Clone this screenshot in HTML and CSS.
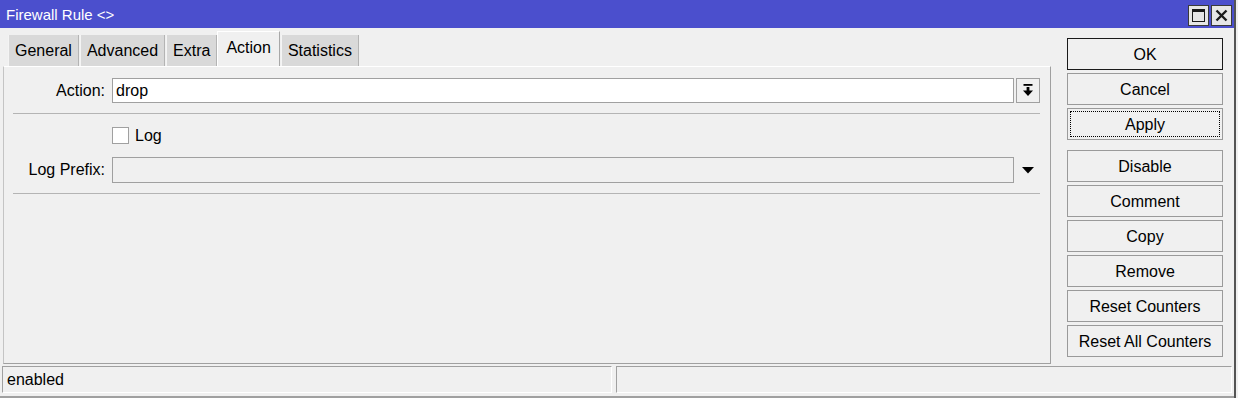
FILE: index.html
```html
<!DOCTYPE html>
<html>
<head>
<meta charset="utf-8">
<link rel="stylesheet" href="styles.css">
</head>
<body>
<div class="window">
  <div class="titlebar">
    <span class="title">Firewall Rule &lt;&gt;</span>
    <div class="wbtns">
      <div class="wbtn">
        <svg width="19" height="19" viewBox="0 0 19 19"><rect x="3.5" y="3.5" width="12" height="12" fill="none" stroke="#1a1a1a" stroke-width="1"/><rect x="3" y="3" width="13" height="3" fill="#1a1a1a"/></svg>
      </div>
      <div class="wbtn">
        <svg width="19" height="19" viewBox="0 0 19 19"><path d="M4.5 4.5 L14.5 14.5 M14.5 4.5 L4.5 14.5" stroke="#1a1a1a" stroke-width="2.4" fill="none"/></svg>
      </div>
    </div>
  </div>
  <div class="main">
    <div class="leftcol">
      <div class="tabs">
        <div class="tab">General</div>
        <div class="tab">Advanced</div>
        <div class="tab">Extra</div>
        <div class="tab active">Action</div>
        <div class="tab">Statistics</div>
      </div>
      <div class="panel">
        <div class="row row-action">
          <label class="lbl">Action:</label>
          <div class="input">drop</div>
          <div class="ddbtn">
            <svg width="22" height="23" viewBox="0 0 22 23"><rect x="6.5" y="5" width="9" height="1.8" fill="#000"/><rect x="9.6" y="8" width="2.8" height="4" fill="#000"/><polygon points="6,11.5 16,11.5 11,17" fill="#000"/></svg>
          </div>
        </div>
        <div class="sep"></div>
        <div class="row row-check">
          <div class="check"></div>
          <span class="checklbl">Log</span>
        </div>
        <div class="row row-prefix">
          <label class="lbl">Log Prefix:</label>
          <div class="input disabled"></div>
          <div class="ddarrow">
            <svg width="12" height="7" viewBox="0 0 12 7"><polygon points="0,0 12,0 6,6.5" fill="#000"/></svg>
          </div>
        </div>
        <div class="sep sep2"></div>
      </div>
    </div>
    <div class="buttons">
      <div class="btn default">OK</div>
      <div class="btn">Cancel</div>
      <div class="btn focus"><span>Apply</span></div>
      <div class="btn group">Disable</div>
      <div class="btn">Comment</div>
      <div class="btn">Copy</div>
      <div class="btn">Remove</div>
      <div class="btn">Reset Counters</div>
      <div class="btn">Reset All Counters</div>
    </div>
  </div>
  <div class="statusbar">
    <div class="sfield first">enabled</div>
    <div class="sfield second"></div>
  </div>
</div>
</body>
</html>
```
FILE: styles.css
```css
html, body {
  margin: 0;
  padding: 0;
  background: #f0f0f0;
}
body {
  font-family: "Liberation Sans", Arial, sans-serif;
  font-size: 16px;
  color: #000;
}
.window {
  width: 1236px;
  height: 398px;
  box-sizing: border-box;
  border-right: 2px solid #555;
  display: flex;
  flex-direction: column;
  background: #f0f0f0;
}
.titlebar {
  height: 28px;
  background: #4b4fcd;
  display: flex;
  align-items: center;
  justify-content: space-between;
  padding: 0 2px 0 6px;
  flex: none;
}
.title {
  color: #fff;
  font-size: 15px;
  margin-top: 1px;
}
.wbtns {
  display: flex;
  gap: 2px;
  margin-top: 2px;
}
.wbtn {
  width: 21px;
  height: 21px;
  box-sizing: border-box;
  border: 1px solid #3a3a3a;
  background: #e6e6e6;
  display: flex;
  align-items: center;
  justify-content: center;
}
.main {
  display: flex;
  height: 336px;
  padding: 3px 0 0 3px;
  box-sizing: border-box;
  flex: none;
}
.leftcol {
  width: 1048px;
  display: flex;
  flex-direction: column;
}
.tabs {
  height: 35px;
  display: flex;
  align-items: flex-end;
  padding-left: 5px;
}
.tab {
  height: 31px;
  box-sizing: border-box;
  background: #d9d9d9;
  border-left: 1px solid #f4f4f4;
  border-right: 1px solid #b4b4b4;
  padding: 1px 6px 0 6px;
  margin-right: 1px;
  display: flex;
  align-items: center;
}
.tab.active {
  height: 35px;
  background: #f0f0f0;
  border-top: 1px solid #fff;
  border-left: 1px solid #fff;
  border-right: 1px solid #a8a8a8;
  margin: 0 1px 0 -1px;
  padding: 0 8px 3px 8px;
  position: relative;
  z-index: 1;
}
.panel {
  height: 298px;
  box-sizing: border-box;
  border-top: 1px solid #fff;
  border-left: 1px solid #c4c4c4;
  border-right: 1px solid #a0a0a0;
  border-bottom: 1px solid #a0a0a0;
  padding-top: 11px;
}
.row {
  display: flex;
  align-items: center;
}
.lbl {
  width: 101px;
  text-align: right;
  margin-right: 7px;
}
.row-action {
  height: 25px;
}
.input {
  width: 902px;
  height: 100%;
  box-sizing: border-box;
  background: #fff;
  border: 1px solid #a0a0a0;
  display: flex;
  align-items: center;
  padding-left: 3px;
}
.input.disabled {
  background: #f0f0f0;
}
.ddbtn {
  width: 24px;
  height: 25px;
  box-sizing: border-box;
  margin-left: 2px;
  border: 1px solid #a0a0a0;
  background: #f0f0f0;
  display: flex;
  align-items: center;
  justify-content: center;
}
.sep {
  height: 1px;
  background: #b4b4b4;
  margin: 10px 0 0 9px;
  width: 1027px;
}
.row-check {
  margin-top: 13px;
  height: 17px;
  padding-left: 108px;
}
.check {
  width: 17px;
  height: 17px;
  box-sizing: border-box;
  background: #fff;
  border: 1px solid #a0a0a0;
}
.checklbl {
  margin-left: 6px;
  padding-top: 1px;
}
.row-prefix {
  margin-top: 13px;
  height: 26px;
}
.ddarrow {
  width: 24px;
  margin-left: 2px;
  display: flex;
  justify-content: center;
  padding-top: 1px;
}
.sep2 {
  margin-top: 10px;
}
.buttons {
  margin-left: 16px;
  padding-top: 7px;
  width: 156px;
  display: flex;
  flex-direction: column;
  gap: 3px;
}
.btn {
  height: 32px;
  box-sizing: border-box;
  border: 1px solid #9a9a9a;
  background: #f0f0f0;
  display: flex;
  align-items: center;
  justify-content: center;
  padding-top: 1px;
}
.btn.default {
  border-color: #1a1a1a;
}
.btn.focus {
  position: relative;
}
.btn.focus::after {
  content: "";
  position: absolute;
  left: 2px;
  top: 2px;
  right: 2px;
  bottom: 2px;
  border: 1px dotted #000;
}
.btn.group {
  margin-top: 7px;
}
.statusbar {
  flex: 1;
  display: flex;
  padding: 2px 2px 0 2px;
  gap: 4px;
  border-bottom: 2px solid #a0a0a0;
  box-sizing: border-box;
}
.sfield {
  height: 27px;
  box-sizing: border-box;
  border-top: 1px solid #a0a0a0;
  border-left: 1px solid #a0a0a0;
  border-right: 1px solid #fff;
  border-bottom: 1px solid #fff;
  display: flex;
  align-items: center;
  padding-left: 4px;
}
.sfield.first {
  width: 610px;
}
.sfield.second {
  flex: 1;
}
```
